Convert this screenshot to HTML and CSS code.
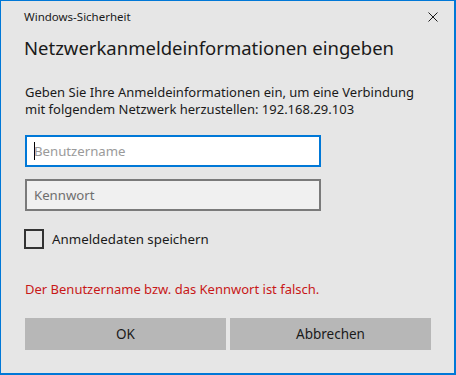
FILE: index.html
```html
<!DOCTYPE html>
<html lang="de">
<head>
<meta charset="utf-8">
<title>Windows-Sicherheit</title>
<link rel="stylesheet" href="styles.css">
</head>
<body>
<div class="dialog">
  <div class="titlebar">
    <span class="app-title">Windows-Sicherheit</span>
    <svg class="close" width="10" height="10" viewBox="0 0 10 10" aria-label="Schließen">
      <path d="M0.5 0.5 L9.5 9.5 M9.5 0.5 L0.5 9.5" stroke="#1a1a1a" stroke-width="1" fill="none"/>
    </svg>
  </div>
  <h1 class="heading">Netzwerkanmeldeinformationen eingeben</h1>
  <p class="desc">Geben Sie Ihre Anmeldeinformationen ein, um eine Verbindung mit folgendem Netzwerk herzustellen: 192.168.29.103</p>
  <div class="field field-focus"><span class="caret"></span><span class="placeholder">Benutzername</span></div>
  <div class="field field-idle"><span class="placeholder dark">Kennwort</span></div>
  <div class="check-row">
    <span class="checkbox"></span>
    <span class="check-label">Anmeldedaten speichern</span>
  </div>
  <p class="error">Der Benutzername bzw. das Kennwort ist falsch.</p>
  <div class="buttons">
    <div class="btn">OK</div>
    <div class="btn">Abbrechen</div>
  </div>
</div>
</body>
</html>
```
FILE: styles.css
```css
html, body {
  margin: 0;
  padding: 0;
}
body {
  font-family: "Noto Sans", "Open Sans", sans-serif;
  color: #1a1a1a;
}
.dialog {
  width: 456px;
  height: 375px;
  box-sizing: border-box;
  background: #e6e6e6;
  border-style: solid;
  border-color: #0078d7;
  border-width: 1px 2px 2px 1px;
  padding: 0 0 0 24px;
  display: flex;
  flex-direction: column;
}
.titlebar {
  display: flex;
  align-items: flex-start;
  justify-content: space-between;
  height: 26px;
  padding-top: 8px;
  box-sizing: border-box;
}
.app-title {
  font-size: 11.5px;
  line-height: 16px;
  margin-left: -1px;
}
.close {
  margin-top: 3px;
  margin-right: 16px;
  display: block;
}
.heading {
  font-size: 18.5px;
  font-weight: 400;
  line-height: 26px;
  margin: 8px 0 0 -1px;
}
.desc {
  font-size: 13px;
  line-height: 16.5px;
  margin: 23px 0 0 0;
  width: 410px;
}
.field {
  width: 296px;
  height: 32px;
  box-sizing: border-box;
  border: 2px solid;
  display: flex;
  align-items: center;
  padding-left: 7px;
  font-size: 13.2px;
}
.field-focus {
  margin-top: 18px;
  border-color: #0078d7;
  background: #ffffff;
}
.field-idle {
  margin-top: 12px;
  border-color: #7a7a7a;
  background: #f0f0f0;
}
.caret {
  width: 1px;
  height: 18px;
  background: #000;
  margin-right: -1px;
}
.placeholder {
  color: #9a9a9a;
  line-height: 28px;
}
.placeholder.dark {
  color: #6e6e6e;
}
.check-row {
  margin-top: 18px;
  display: flex;
  align-items: center;
  height: 20px;
}
.checkbox {
  width: 20px;
  height: 20px;
  box-sizing: border-box;
  border: 2px solid #333333;
  margin-left: -1px;
}
.check-label {
  font-size: 13.3px;
  line-height: 20px;
  margin-left: 8px;
}
.error {
  color: #c81818;
  font-size: 13px;
  line-height: 20px;
  margin: 30px 0 0 0;
}
.buttons {
  margin-top: 19px;
  display: flex;
  gap: 4px;
}
.btn {
  width: 201px;
  height: 32px;
  background: #b7b7b7;
  font-size: 13.5px;
  line-height: 32px;
  text-align: center;
  color: #1a1a1a;
}
```
